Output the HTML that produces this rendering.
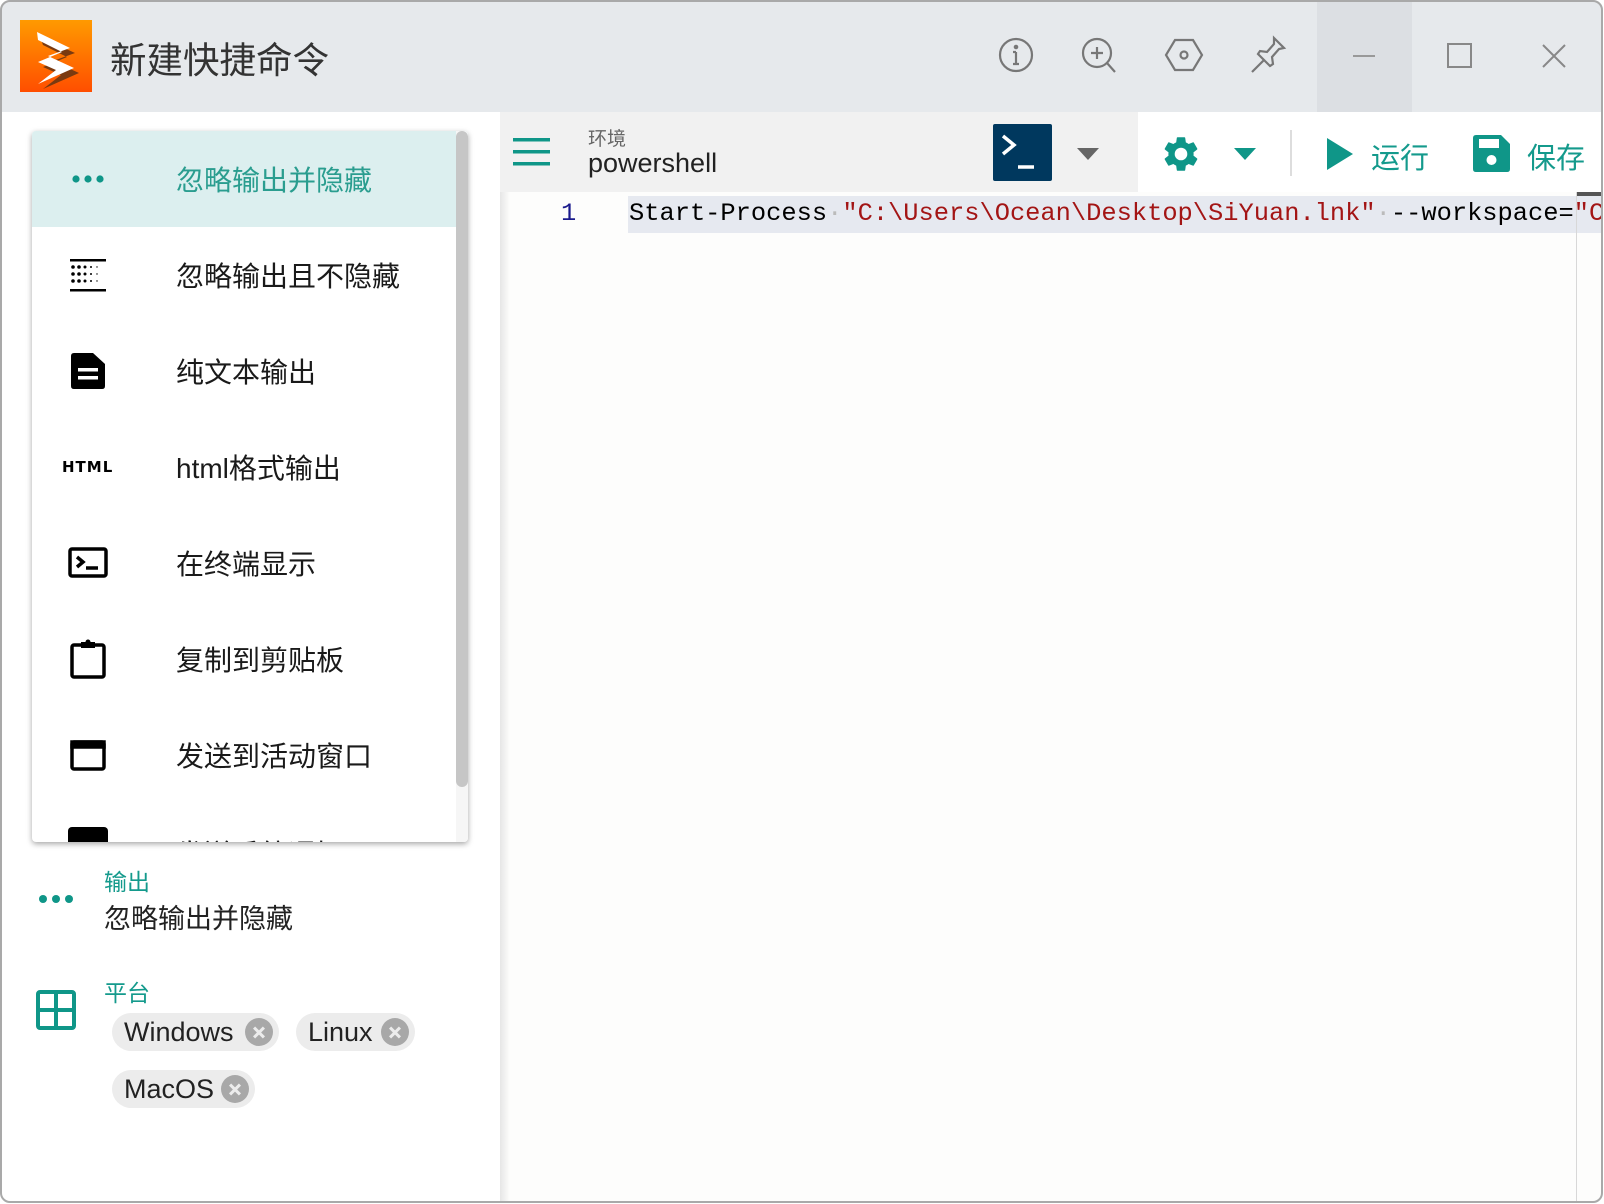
<!DOCTYPE html>
<html><head><meta charset="utf-8">
<style>
*{margin:0;padding:0;box-sizing:border-box}
body{width:1604px;height:1204px;background:#fff;overflow:hidden;font-family:"Liberation Sans","Noto Sans CJK SC",sans-serif;position:relative}
.win{position:absolute;left:0;top:0;width:1603px;height:1203px;border-radius:10px;overflow:hidden;background:#fff}
.frame{position:absolute;left:0;top:0;width:1603px;height:1203px;border:2px solid #a9a9a9;border-radius:10px}
.title{position:absolute;left:0;top:0;width:100%;height:112px;background:#e6e9ec}
.abs{position:absolute}
.ti{position:absolute;top:36px;width:40px;height:40px}
.left{position:absolute;left:0;top:0;width:500px;height:1204px}
.card{position:absolute;left:32px;top:131px;width:436px;height:711px;background:#fff;border-radius:4px;box-shadow:0 2px 6px rgba(0,0,0,.35);overflow:hidden}
.item{position:absolute;left:0;width:424px;height:96px}
.item .t{position:absolute;left:144px;top:50%;transform:translateY(-50%);font-size:28px;color:#1a1a1a;white-space:nowrap}
.item .ic{position:absolute;left:36px;top:50%;transform:translateY(-50%);width:40px;height:40px}
.chip{position:absolute;height:38px;background:#ececec;border-radius:19px;font-size:27px;color:#222;padding-left:12px;line-height:38px}
.chip i{position:absolute;right:6px;top:5px;width:28px;height:28px;border-radius:50%;background:#a8a8a8}
.chip i:before,.chip i:after{content:"";position:absolute;left:7px;top:12.5px;width:14px;height:3px;background:#ececec;transform:rotate(45deg)}
.chip i:after{transform:rotate(-45deg)}
.code{font-family:"Liberation Mono",monospace;font-size:25.4px}
</style></head><body>
<div class="win">
<div class="title">
 <svg class="abs" style="left:20px;top:20px" width="72" height="72" viewBox="0 0 72 72">
  <defs><linearGradient id="g" x1="0" y1="0" x2="0" y2="1"><stop offset="0" stop-color="#ff9a00"/><stop offset="1" stop-color="#ff4e00"/></linearGradient></defs>
  <rect width="72" height="72" fill="url(#g)"/>
  <path d="M17 14 L52 30 L30 38 L56 50 L20 66 L38 52 L20 44 L44 34 L20 22Z" fill="#7a3a10" transform="translate(3,3)"/>
  <path d="M17 12 L50 28 L28 36 L54 48 L18 64 L36 50 L18 42 L42 32 L18 20Z" fill="#fff"/>
 </svg>
 <div class="abs" style="left:110px;top:31px;font-size:36.5px;color:#333">新建快捷命令</div>
 <svg class="ti" style="left:996px;top:35px" viewBox="0 0 40 40" fill="none" stroke="#777" stroke-width="2.2"><circle cx="20" cy="20" r="16"/><path d="M20 17v12M17 29h6M17 17h3"/><circle cx="20" cy="12" r="1.2" fill="#777"/></svg>
 <svg class="ti" style="left:1079px;top:35px" viewBox="0 0 40 40" fill="none" stroke="#777" stroke-width="2.2"><circle cx="18" cy="18" r="14"/><path d="M28 28l8 9M18 12v12M12 18h12"/></svg>
 <svg class="ti" style="left:1164px;top:35px" viewBox="0 0 40 40" fill="none" stroke="#777" stroke-width="2.2"><path d="M11 5h18l9 15-9 15H11L2 20z"/><circle cx="20" cy="20" r="3.5"/></svg>
 <svg class="ti" style="left:1248px;top:35px" viewBox="0 0 40 40" fill="none" stroke="#777" stroke-width="2.2"><path d="M26 3l10 10-5 1-7 8 1 7-3 2-6-6-12 12 12-12-6-6 2-3 7 1 7-8z"/></svg>
 <div class="abs" style="left:1317px;top:0;width:95px;height:112px;background:#dcdfe3"></div>
 <div class="abs" style="left:1353px;top:55px;width:22px;height:2px;background:#999"></div>
 <div class="abs" style="left:1447px;top:43px;width:25px;height:25px;border:2px solid #888"></div>
 <svg class="abs" style="left:1541px;top:43px" width="26" height="26" viewBox="0 0 26 26" stroke="#888" stroke-width="2"><path d="M2 2l22 22M24 2L2 24"/></svg>
</div>

<div class="left">
 <div class="card">
  <div class="item" style="top:0;background:#dcefef;width:436px"><svg class="ic" viewBox="0 0 40 40" fill="#0f9688"><circle cx="8" cy="20" r="3.6"/><circle cx="20" cy="20" r="3.6"/><circle cx="32" cy="20" r="3.6"/></svg><div class="t" style="color:#2a9d8f">忽略输出并隐藏</div></div>
  <div class="item" style="top:96px"><svg class="ic" viewBox="0 0 40 40" fill="#000"><rect x="2" y="4" width="36" height="2.5"/><rect x="2" y="34" width="36" height="2.5"/><circle cx="5" cy="12" r="1.8"/><circle cx="11" cy="12" r="1.8"/><circle cx="17" cy="12" r="1.5"/><circle cx="23" cy="12" r="1"/><circle cx="29" cy="12" r=".7"/><circle cx="5" cy="19" r="1.8"/><circle cx="11" cy="19" r="1.8"/><circle cx="17" cy="19" r="1.5"/><circle cx="23" cy="19" r="1"/><circle cx="29" cy="19" r=".7"/><circle cx="5" cy="26" r="1.8"/><circle cx="11" cy="26" r="1.8"/><circle cx="17" cy="26" r="1.5"/><circle cx="23" cy="26" r="1"/><circle cx="29" cy="26" r=".7"/></svg><div class="t">忽略输出且不隐藏</div></div>
  <div class="item" style="top:192px"><svg class="ic" viewBox="0 0 40 40"><path d="M3 5q0-3 3-3h19l12 11v22q0 3-3 3H6q-3 0-3-3z" fill="#000"/><rect x="10" y="17" width="20" height="3.5" fill="#fff"/><rect x="10" y="25" width="20" height="3.5" fill="#fff"/></svg><div class="t">纯文本输出</div></div>
  <div class="item" style="top:288px"><div class="ic" style="font:900 15px 'DejaVu Sans',sans-serif;line-height:40px;width:60px;left:30px;letter-spacing:1px">HTML</div><div class="t">html格式输出</div></div>
  <div class="item" style="top:384px"><svg class="ic" viewBox="0 0 40 40" fill="none" stroke="#000" stroke-width="3.5"><rect x="2" y="6" width="36" height="27" rx="2"/><path d="M9 14l6 5-6 5"/><path d="M18 25h12" stroke-width="3.5"/></svg><div class="t">在终端显示</div></div>
  <div class="item" style="top:480px"><svg class="ic" viewBox="0 0 40 40" fill="none" stroke="#000" stroke-width="3.5"><rect x="4" y="6" width="32" height="32" rx="2"/><rect x="13" y="3" width="14" height="6" fill="#000" stroke="none"/><circle cx="20" cy="3" r="2.5" fill="#000" stroke="none"/></svg><div class="t">复制到剪贴板</div></div>
  <div class="item" style="top:576px"><svg class="ic" viewBox="0 0 40 40" fill="none" stroke="#000" stroke-width="3.5"><rect x="4" y="7" width="32" height="27" rx="2"/><rect x="4" y="7" width="32" height="5" fill="#000"/></svg><div class="t">发送到活动窗口</div></div>
  <div class="item" style="top:672px"><div class="ic" style="top:24px;width:40px;height:40px;background:#000;border-radius:4px;transform:none"></div><div class="t" style="top:30px;transform:none">发送系统通知</div></div>
  <div class="abs" style="left:424px;top:0;width:12px;height:711px;background:#f6f6f6"></div>
  <div class="abs" style="left:424px;top:0;width:12px;height:656px;background:#c6c6c6;border-radius:6px"></div>
 </div>
 <svg class="abs" style="left:38px;top:893px" width="36" height="12" fill="#0f9688"><circle cx="5" cy="6" r="4"/><circle cx="18" cy="6" r="4"/><circle cx="31" cy="6" r="4"/></svg>
 <div class="abs" style="left:104px;top:863px;font-size:23px;color:#149a8c">输出</div>
 <div class="abs" style="left:104px;top:897px;font-size:27px;color:#222">忽略输出并隐藏</div>
 <svg class="abs" style="left:36px;top:990px" width="40" height="40" viewBox="0 0 40 40" fill="none" stroke="#0f9688" stroke-width="4"><rect x="2" y="2" width="36" height="36" rx="2"/><path d="M20 2v36M2 20h36"/></svg>
 <div class="abs" style="left:104px;top:974px;font-size:23px;color:#149a8c">平台</div>
 <div class="chip" style="left:112px;top:1013px;width:167px">Windows<i></i></div>
 <div class="chip" style="left:296px;top:1013px;width:119px">Linux<i></i></div>
 <div class="chip" style="left:112px;top:1070px;width:143px">MacOS<i></i></div>
</div>

<div class="abs" style="left:500px;top:112px;width:1110px;height:1100px;background:#fdfdfc"></div>
<div class="abs" style="left:500px;top:112px;width:10px;height:1100px;background:linear-gradient(90deg,#e6e6e6,rgba(255,255,255,0))"></div>
<div class="abs" style="left:500px;top:112px;width:638px;height:80px;background:#f1f1f1"></div>
<div class="abs" style="left:1138px;top:112px;width:470px;height:80px;background:#fff"></div>
<svg class="abs" style="left:513px;top:138px" width="37" height="28" fill="#0f9688"><rect y="0" width="37" height="3.5"/><rect y="12" width="37" height="3.5"/><rect y="24" width="37" height="3.5"/></svg>
<div class="abs" style="left:588px;top:124px;font-size:19px;color:#666">环境</div>
<div class="abs" style="left:588px;top:148px;font-size:27px;color:#222">powershell</div>
<div class="abs" style="left:993px;top:124px;width:59px;height:57px;background:#00385e;border-radius:2px"></div>
<svg class="abs" style="left:993px;top:124px" width="59" height="57" fill="none" stroke="#fff" stroke-width="3.5"><path d="M10 12l11 9-11 9"/><path d="M25 43h16"/></svg>
<svg class="abs" style="left:1077px;top:148px" width="22" height="12"><path d="M0 0h22L11 12z" fill="#666"/></svg>
<svg class="abs" style="left:1160px;top:133px" width="42" height="42" viewBox="0 0 24 24"><path fill="#0f9688" d="M19.14 12.94c.04-.3.06-.61.06-.94s-.02-.64-.07-.94l2.03-1.58a.49.49 0 0 0 .12-.61l-1.92-3.32a.49.49 0 0 0-.59-.22l-2.39.96a7 7 0 0 0-1.62-.94l-.36-2.54a.48.48 0 0 0-.48-.41h-3.840a.48.48 0 0 0-.47.41l-.36 2.54c-.59.24-1.13.57-1.62.94l-2.39-.96a.48.48 0 0 0-.59.22L2.74 8.87a.47.47 0 0 0 .12.61l2.03 1.58c-.05.3-.09.63-.09.94s.02.64.07.94l-2.03 1.58a.49.49 0 0 0-.12.61l1.92 3.32c.12.22.37.29.59.22l2.39-.96c.5.38 1.03.7 1.62.94l.36 2.54c.05.24.24.41.48.41h3.84c.24 0 .44-.17.47-.41l.36-2.54c.59-.24 1.13-.56 1.62-.94l2.39.96c.22.08.47 0 .59-.22l1.92-3.32c.12-.22.07-.47-.12-.61zM12 15.6A3.6 3.6 0 1 1 12 8.4a3.6 3.6 0 0 1 0 7.2z"/></svg>
<svg class="abs" style="left:1234px;top:148px" width="22" height="12"><path d="M0 0h22L11 12z" fill="#0f9688"/></svg>
<div class="abs" style="left:1290px;top:130px;width:2px;height:46px;background:#ddd"></div>
<svg class="abs" style="left:1327px;top:138px" width="26" height="32"><path d="M0 0l26 16L0 32z" fill="#0f9688"/></svg>
<div class="abs" style="left:1371px;top:135px;font-size:29px;color:#149a8c">运行</div>
<svg class="abs" style="left:1473px;top:135px" width="37" height="37" viewBox="0 0 37 37"><path d="M0 3q0-3 3-3h25l9 9v25q0 3-3 3H3q-3 0-3-3z" fill="#0f9688"/><rect x="6" y="4" width="20" height="9" fill="#fff"/><circle cx="18.5" cy="25" r="5" fill="#fff"/></svg>
<div class="abs" style="left:1527px;top:135px;font-size:29px;color:#149a8c">保存</div>

<div class="abs" style="left:628px;top:196px;width:980px;height:37px;background:#e6e9f0"></div>
<div class="abs code" style="left:561px;top:199px;color:#1a1a8c">1</div>
<div class="abs code" style="left:629px;top:199px;white-space:nowrap;color:#000">Start-Process<span style="color:#bbb">·</span><span style="color:#a31515">"C:\Users\Ocean\Desktop\SiYuan.lnk"</span><span style="color:#bbb">·</span>--workspace=<span style="color:#a31515">"C</span></div>
<div class="abs" style="left:1576px;top:192px;width:1px;height:1020px;background:#d8d8d8"></div>
<div class="abs" style="left:1577px;top:192px;width:30px;height:4px;background:#555"></div>
</div>
<div class="frame"></div>
</body></html>
